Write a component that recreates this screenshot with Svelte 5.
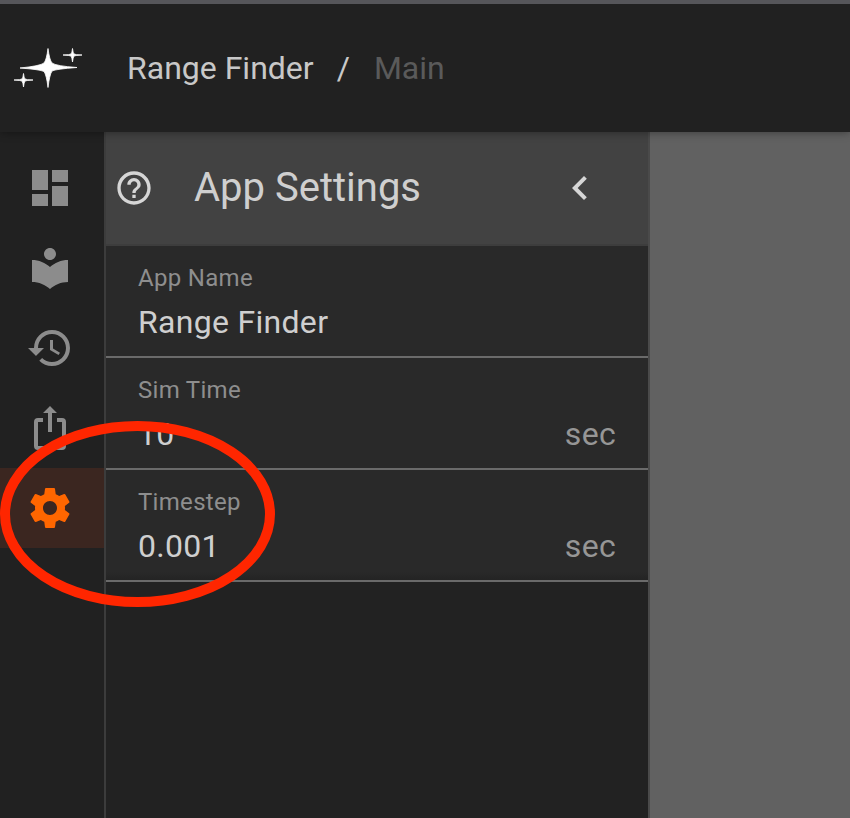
<script>
	const fields = [
		{ label: 'App Name', value: 'Range Finder', unit: '' },
		{ label: 'Sim Time', value: '10', unit: 'sec' },
		{ label: 'Timestep', value: '0.001', unit: 'sec' }
	];
</script>

<div class="app">
	<header class="topbar">
		<svg class="logo" width="70" height="42" viewBox="0 0 70 42">
			<g fill="#fff" stroke="#fff" stroke-width="0.8" stroke-linejoin="round">
				<path d="M34 .5 Q35.500 12 38 15 Q42 18 63 19.500 Q42 21 38 23 Q35.500 27 34 39.500 Q32.500 27 30 23.500 Q26 21.500 6 20 Q26 18 30 15 Q32.500 12 34 .5 Z" />
				<path d="M58.500 .5 Q59 5 60 6 Q61 6.800 68 7 Q61 7.400 60 8 Q59 9.500 58.500 14 Q58 9.500 57 8 Q56 7.400 49 7 Q56 6.800 57 6 Q58 5 58.500 .5 Z" />
				<path d="M9.500 25.500 Q10 30 11 31 Q12 31.800 19 32 Q12 32.400 11 33 Q10 34.500 9.500 39 Q9 34.500 8 33 Q7 32.400 0 32 Q7 31.800 8 31 Q9 30 9.500 25.500 Z" />
			</g>
		</svg>
		<nav class="crumbs">
			<span class="app-name">Range Finder</span>
			<span class="slash">/</span>
			<span class="page">Main</span>
		</nav>
	</header>

	<div class="body">
		<aside class="rail">
			<div class="rail-item">
				<svg width="48" height="48" viewBox="0 0 24 24"><path fill="#8c8c8c" d="M3 13h8V3H3v10zm0 8h8v-6H3v6zm10 0h8V11h-8v10zm0-18v6h8V3h-8z" /></svg>
			</div>
			<div class="rail-item">
				<svg width="48" height="48" viewBox="0 0 24 24"><path fill="#8c8c8c" d="M12 11.55C9.64 9.35 6.48 8 3 8v11c3.48 0 6.64 1.35 9 3.55 2.36-2.19 5.52-3.55 9-3.55V8c-3.48 0-6.64 1.35-9 3.55zM12 8c1.66 0 3-1.34 3-3s-1.34-3-3-3-3 1.34-3 3 1.34 3 3 3z" /></svg>
			</div>
			<div class="rail-item">
				<svg width="48" height="48" viewBox="0 0 24 24"><path fill="#8c8c8c" d="M13 3a9 9 0 0 0-9 9H1l3.89 3.89.07.14L9 12H6c0-3.87 3.13-7 7-7s7 3.13 7 7-3.13 7-7 7c-1.93 0-3.68-.79-4.94-2.06l-1.42 1.42A8.954 8.954 0 0 0 13 21a9 9 0 0 0 0-18zm-1 5v5l4.28 2.54.72-1.21-3.5-2.08V8H12z" /></svg>
			</div>
			<div class="rail-item">
				<svg width="48" height="48" viewBox="0 0 24 24"><path fill="none" stroke="#8c8c8c" stroke-width="2" d="M8.500 8H6a1 1 0 0 0-1 1V21a1 1 0 0 0 1 1H18a1 1 0 0 0 1-1V9a1 1 0 0 0-1-1H15.500" /><path fill="#8c8c8c" d="M12 1 8.500 4.500H11V14H13V4.500H15.500Z" /></svg>
			</div>
			<div class="rail-item active">
				<svg width="48" height="48" viewBox="0 0 24 24"><path fill="#ff6600" d="M19.43 12.98c.04-.32.07-.64.07-.98s-.03-.66-.07-.98l2.11-1.65c.19-.15.24-.42.12-.64l-2-3.46c-.12-.22-.39-.3-.61-.22l-2.49 1c-.52-.4-1.08-.73-1.69-.98l-.38-2.65A.488.488 0 0 0 14 2h-4c-.25 0-.46.18-.49.42l-.38 2.65c-.61.25-1.17.59-1.69.98l-2.49-1c-.23-.09-.49 0-.61.22l-2 3.46c-.13.22-.07.49.12.64l2.11 1.65c-.04.32-.07.65-.07.98s.03.66.07.98l-2.11 1.65c-.19.15-.24.42-.12.64l2 3.46c.12.22.39.3.61.22l2.49-1c.52.4 1.08.73 1.69.98l.38 2.65c.03.24.24.42.49.42h4c.25 0 .46-.18.49-.42l.38-2.65c.61-.25 1.17-.59 1.69-.98l2.49 1c.23.09.49 0 .61-.22l2-3.46c.12-.22.07-.49-.12-.64l-2.11-1.65zM12 15.500c-1.930 0-3.500-1.570-3.500-3.500s1.570-3.500 3.500-3.500 3.500 1.570 3.500 3.500-1.570 3.500-3.500 3.500z" /></svg>
			</div>
		</aside>

		<section class="panel">
			<div class="panel-head">
				<svg class="help" width="40" height="40" viewBox="0 0 24 24"><path fill="#d6d6d6" d="M11 18h2v-2h-2v2zm1-16C6.480 2 2 6.480 2 12s4.480 10 10 10 10-4.480 10-10S17.520 2 12 2zm0 18c-4.410 0-8-3.590-8-8s3.590-8 8-8 8 3.590 8 8-3.590 8-8 8zm0-14c-2.210 0-4 1.790-4 4h2c0-1.100.9-2 2-2s2 .9 2 2c0 2-3 1.750-3 5h2c0-2.250 3-2.500 3-5 0-2.210-1.790-4-4-4z" /></svg>
				<h1>App Settings</h1>
				<svg class="chev" width="48" height="48" viewBox="0 0 24 24"><path fill="#d6d6d6" d="M15.410 7.410 14 6l-6 6 6 6 1.410-1.410L10.830 12z" /></svg>
			</div>
			{#each fields as f}
				<div class="field">
					<div class="label">{f.label}</div>
					<div class="row">
						<span class="value">{f.value}</span>
						{#if f.unit}<span class="unit">{f.unit}</span>{/if}
					</div>
				</div>
			{/each}
		</section>

		<div class="content"></div>
	</div>

	<!-- hand drawn annotation over the screenshot -->
	<svg class="mark" width="290" height="200" viewBox="0 0 290 200">
		<ellipse cx="137.500" cy="96" rx="132.500" ry="88" fill="none" stroke="#ff2600" stroke-width="10" />
	</svg>
</div>

<style>
	:global(body) {
		background: #212121;
	}

	.app {
		position: relative;
		width: 850px;
		height: 818px;
		overflow: hidden;
		display: flex;
		flex-direction: column;
		font-family: Roboto, sans-serif;
		background: #212121;
		border-top: 4px solid #56565a;
		box-sizing: border-box;
	}

	.topbar {
		position: relative;
		z-index: 1;
		height: 128px;
		flex: none;
		display: flex;
		align-items: center;
		padding-left: 14px;
		box-sizing: border-box;
		background: #212121;
		box-shadow: 0 1px 8px rgba(0, 0, 0, 0.35);
	}

	.logo {
		flex: none;
		margin-top: 1px;
	}

	.crumbs {
		display: flex;
		align-items: baseline;
		margin-left: 43px;
		font-size: 32px;
		line-height: 38px;
		margin-top: -1px;
	}

	.app-name {
		color: #c8c8c8;
	}

	.slash {
		color: #c8c8c8;
		margin: 0 24px 0 23px;
	}

	.page {
		color: #5a5a5a;
	}

	.body {
		flex: 1;
		display: flex;
		min-height: 0;
	}

	.rail {
		width: 106px;
		flex: none;
		display: flex;
		flex-direction: column;
		padding-top: 16px;
		box-sizing: border-box;
		border-right: 2px solid #3c3c3c;
		background: #212121;
	}

	.rail-item {
		height: 80px;
		width: 104px;
		display: flex;
		align-items: center;
		justify-content: center;
		box-sizing: border-box;
	}

	.rail-item svg {
		margin-left: -4px;
	}

	.rail-item.active {
		background: #3b2620;
	}

	.panel {
		width: 542px;
		flex: none;
		align-self: stretch;
		background: linear-gradient(#292929 0, #292929 440px, #222 450px);
	}

	.panel-head {
		height: 114px;
		background: #424242;
		display: flex;
		align-items: center;
		box-sizing: border-box;
		border-bottom: 2px solid #3d3d3d;
		color: #cfcfcf;
	}

	.help {
		margin-left: 8px;
		flex: none;
	}

	h1 {
		margin: -1px 0 0 40px;
		font-size: 40px;
		font-weight: 400;
		flex: 1;
	}

	.chev {
		flex: none;
		margin-right: 44px;
	}

	.field {
		height: 112px;
		padding: 17px 32px 0;
		box-sizing: border-box;
		border-bottom: 2px solid #6a6a6a;
	}

	.label {
		font-size: 24px;
		line-height: 30px;
		letter-spacing: 0.3px;
		color: #8e8e8e;
	}

	.row {
		display: flex;
		justify-content: space-between;
		align-items: baseline;
		margin-top: 10px;
		font-size: 32px;
		line-height: 38px;
		letter-spacing: 0.3px;
	}

	.value {
		color: #cfcfcf;
	}

	.unit {
		color: #969696;
	}

	.content {
		flex: 1;
		background: #616161;
		border-left: 2px solid #4a4a4a;
	}

	.mark {
		position: absolute;
		left: 0;
		top: 414px;
		pointer-events: none;
	}
</style>
